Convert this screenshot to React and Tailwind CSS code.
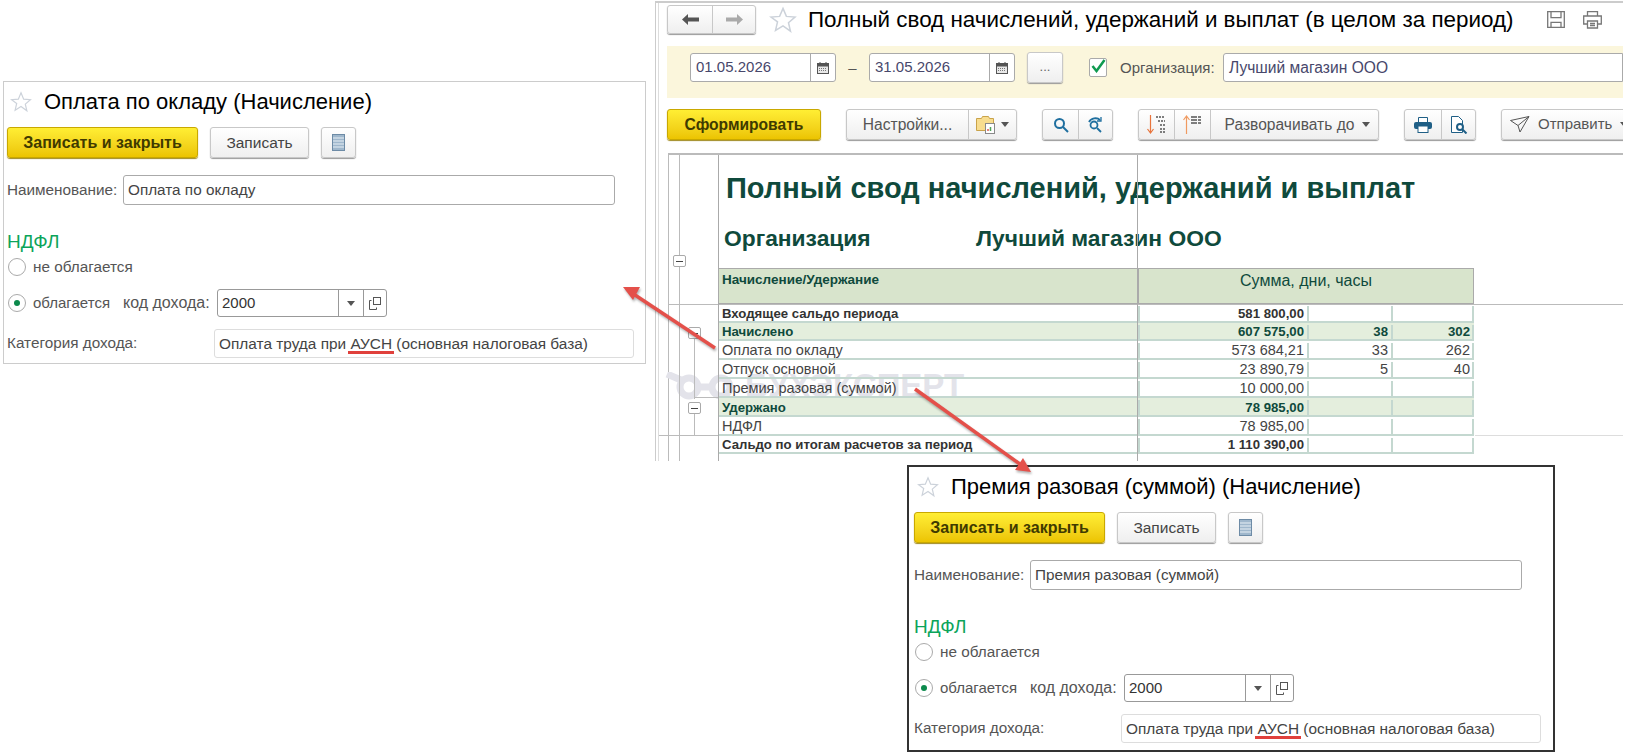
import React from 'react';

const FONT = { fontFamily: '"Liberation Sans", Arial, sans-serif' };

// ----- small drawn icons -----
const Star = ({ className }) => (
  <svg viewBox="0 0 24 24" className={className} fill="none" stroke="#ccd2da" strokeWidth="1.3">
    <path d="M12 2l2.9 6.9 7.4.6-5.6 4.8 1.7 7.3L12 17l-6.4 3.9 1.7-7.3L1.700 9.500l7.400-.6z" />
  </svg>
);

const ListIcon = () => (
  <svg width="13" height="17" viewBox="0 0 13 17">
    <rect x="0.500" y="0.500" width="12" height="16" fill="#9fb7cc" stroke="#6d8ba6" />
    <path d="M1 4h11M1 7h11M1 10h11M1 13h11" stroke="#e8f0f6" strokeWidth="1" />
  </svg>
);

const CopyIcon = () => (
  <svg width="12" height="13" viewBox="0 0 12 13" fill="none" stroke="#555">
    <rect x="4.500" y="0.500" width="7" height="7" />
    <path d="M2.500 3.500H.5v9h7v-2" />
  </svg>
);

const Caret = ({ color = '#555' }) => (
  <svg width="8" height="5" viewBox="0 0 8 5" className="shrink-0"><path d="M0 0h8L4 5z" fill={color} /></svg>
);

const Calendar = () => (
  <svg width="12" height="12" viewBox="0 0 12 12">
    <rect x="0.500" y="1.500" width="11" height="10" fill="#e8e8e8" stroke="#555" />
    <rect x="0.500" y="1.500" width="11" height="3" fill="#555" />
    <path d="M3 0v3M9 0v3" stroke="#555" />
    <path d="M2 6.500h8M2 8.500h8" stroke="#777" strokeDasharray="1 1" />
  </svg>
);

const Search = () => (
  <svg width="16" height="16" viewBox="0 0 16 16" fill="none" stroke="#1f6f9f" strokeWidth="2">
    <circle cx="6.500" cy="6.500" r="4.500" />
    <path d="M10 10l5 5" />
  </svg>
);

const SearchNext = () => (
  <svg width="17" height="16" viewBox="0 0 17 16" fill="none" stroke="#1f6f9f" strokeWidth="1.8">
    <circle cx="7" cy="8" r="3.500" />
    <path d="M10 11l4 4M2 5c2-4 8-5 11-2" />
    <path d="M14 0v4h-4" strokeWidth="1.300" />
  </svg>
);

const FolderReport = () => (
  <svg width="20" height="19" viewBox="0 0 20 19">
    <path d="M.5 3.500h5l1-2h6l1 2h4v12H.5z" fill="#f8dd8f" stroke="#c9a34a" />
    <rect x="9.500" y="8.500" width="9" height="10" fill="#fff" stroke="#8a8a8a" />
    <path d="M12 16v-2" stroke="#e0574f" strokeWidth="1.500" />
    <path d="M14.500 16v-4" stroke="#4fa45a" strokeWidth="1.500" />
  </svg>
);

const SortDown = () => (
  <svg width="19" height="19" viewBox="0 0 19 19" fill="none">
    <path d="M3.500 0v17M.5 14l3 4 3-4" stroke="#e8743c" strokeWidth="1.200" />
    <path d="M9 2h9M11 6h7M13 10h5M13 14h5M13 17h5" stroke="#555" strokeWidth="1.300" strokeDasharray="2 1" />
  </svg>
);

const SortUp = () => (
  <svg width="19" height="19" viewBox="0 0 19 19" fill="none">
    <path d="M3.500 2v17M.5 5l3-4 3 4" stroke="#f09a60" strokeWidth="1.200" />
    <path d="M8 2h10M8 5h10M8 8h10" stroke="#555" strokeWidth="1.300" strokeDasharray="6 1" />
  </svg>
);

const Printer = () => (
  <svg width="18" height="16" viewBox="0 0 18 16">
    <path d="M4.500 5V.5h9V5" fill="#fff" stroke="#1f5f86" />
    <rect x="0" y="5" width="18" height="7" rx="2" fill="#1f5f86" />
    <rect x="4" y="9" width="10" height="6.500" fill="#fff" stroke="#1f5f86" />
  </svg>
);

const Preview = () => (
  <svg width="18" height="18" viewBox="0 0 18 18" fill="none">
    <path d="M1.500.5h7l4 4v12h-11z" stroke="#1f5f86" fill="#fff" />
    <circle cx="10" cy="11" r="3" stroke="#1f5f86" strokeWidth="2" />
    <path d="M12.500 13.500l4 4" stroke="#1f5f86" strokeWidth="2" />
  </svg>
);

const Plane = () => (
  <svg width="20" height="17" viewBox="0 0 20 17" fill="none" stroke="#555" className="shrink-0">
    <path d="M.5 4.500L19 .5l-9 15.500L8 9.500zM8 9.500L19 .5" />
  </svg>
);

const Floppy = () => (
  <svg width="18" height="17" viewBox="0 0 18 17" fill="none" stroke="#777" strokeWidth="1.300">
    <path d="M.7.7h16.600v15.600H.7z" />
    <path d="M4 .7v6h10v-6M4 16.300v-5h10v5" />
  </svg>
);

const GrayPrinter = () => (
  <svg width="19" height="18" viewBox="0 0 19 18" fill="none" stroke="#777" strokeWidth="1.300">
    <path d="M4.500 5V.7h10V5M4 13H.7V5h17.600v8H15" />
    <path d="M4.500 10h10v7h-10zM7 12.500h5M7 14.500h5" />
  </svg>
);

const ArrowGlyph = ({ dir, color }) => (
  <svg width="17" height="11" viewBox="0 0 17 11" fill={color}>
    {dir === 'left' ? <path d="M0 5.500L6 0v3.500h11v4H6V11z" /> : <path d="M17 5.500L11 0v3.500H0v4h11V11z" />}
  </svg>
);

const Minus = ({ className }) => (
  <div className={`flex items-center justify-center w-[13px] h-[12px] bg-white border border-[#aaa] rounded-[2px] ${className}`}>
    <div className="w-[7px] h-[1px] bg-[#444]" />
  </div>
);

// ----- buttons and fields -----
const YELLOW = 'bg-gradient-to-b from-[#ffee33] to-[#ecc400] border border-[#c9a800] rounded-[3px] shadow-[0_1px_1px_#a08a20]';
const GRAY = 'bg-gradient-to-b from-white to-[#efefef] border border-[#c8c8c8] rounded-[3px] shadow-[0_1px_1px_#999]';

const Radio = ({ checked }) => (
  <div className="flex items-center justify-center w-[18px] h-[18px] rounded-full border border-[#aaa] bg-white shrink-0">
    {checked && <div className="w-[6px] h-[6px] rounded-full bg-[#0c8a4c]" />}
  </div>
);

// ----- the two item forms -----
const ItemForm = ({ frame, title, name, pad }) => (
  <div className={`absolute bg-white ${frame}`}>
    <div className={`flex items-center h-[39px] ${pad}`}>
      <Star className="w-[22px] h-[22px] ml-[3px] shrink-0" />
      <span className="ml-[12px] text-[22px] text-black whitespace-nowrap">{title}</span>
    </div>
    <div className={`flex mt-[6px] h-[31px] ${pad}`}>
      <div className={`flex items-center justify-center w-[191px] text-[16px] font-bold text-[#3f3a00] ${YELLOW}`}>Записать и закрыть</div>
      <div className={`flex items-center justify-center w-[99px] ml-[12px] text-[15.500px] text-[#444] ${GRAY}`}>Записать</div>
      <div className={`flex items-center justify-center w-[35px] ml-[12px] ${GRAY}`}><ListIcon /></div>
    </div>
    <div className={`flex items-center mt-[17px] h-[30px] ${pad}`}>
      <span className="w-[116px] text-[15.300px] text-[#555]">Наименование:</span>
      <div className="flex items-center w-[492px] h-full pl-[4px] border border-[#aaa] rounded-[3px] text-[15.300px] text-[#444]">{name}</div>
    </div>
    <div className={`flex items-center mt-[25px] h-[24px] text-[19px] text-[#0ba45a] ${pad}`}>НДФЛ</div>
    <div className={`flex items-center mt-[4px] h-[18px] text-[15.300px] text-[#555] ${pad}`}>
      <div className="ml-px"><Radio /></div>
      <span className="ml-[7px]">не облагается</span>
    </div>
    <div className={`flex items-center mt-[13px] h-[28px] text-[15px] text-[#555] ${pad}`}>
      <div className="ml-px"><Radio checked /></div>
      <span className="ml-[7px] w-[90px]">облагается</span>
      <span className="w-[94px] text-[16px] whitespace-nowrap">код дохода:</span>
      <div className="flex w-[170px] h-full border border-[#999] rounded-[3px]">
        <div className="flex items-center w-[120px] pl-[4px] text-[15px] text-[#333]">2000</div>
        <div className="flex items-center justify-center w-[25px] border-l border-[#999]"><Caret /></div>
        <div className="flex items-center justify-center flex-1 border-l border-[#999]"><CopyIcon /></div>
      </div>
    </div>
    <div className={`flex items-center mt-[12px] h-[29px] ${pad}`}>
      <span className="w-[207px] text-[15.300px] text-[#555]">Категория дохода:</span>
      <div className="flex items-center w-[420px] h-full pl-[4px] border border-[#ddd] rounded-[3px] text-[15.400px] text-[#444] whitespace-nowrap">
        Оплата труда при&nbsp;
        <span className="relative">
          АУСН
          <span className="absolute -left-[2px] -right-[2px] top-[19px] h-[3px] bg-[#e0403c]" />
        </span>
        &nbsp;(основная налоговая база)
      </div>
    </div>
  </div>
);

// ----- report data -----
const ROWS = [
  { h: 19, kind: 'total', name: 'Входящее сальдо периода', sum: '581 800,00' },
  { h: 18, kind: 'group', name: 'Начислено', sum: '607 575,00', days: '38', hours: '302' },
  { h: 19, name: 'Оплата по окладу', sum: '573 684,21', days: '33', hours: '262' },
  { h: 19, name: 'Отпуск основной', sum: '23 890,79', days: '5', hours: '40' },
  { h: 19, name: 'Премия разовая (суммой)', sum: '10 000,00' },
  { h: 19, kind: 'group', name: 'Удержано', sum: '78 985,00' },
  { h: 19, name: 'НДФЛ', sum: '78 985,00' },
  { h: 18, kind: 'total', name: 'Сальдо по итогам расчетов за период', sum: '1 110 390,00' },
];

const ReportRow = ({ row }) => {
  const tone =
    row.kind === 'group'
      ? 'bg-[#e4eedd] font-bold text-[13.200px] text-[#0f4a3c]'
      : row.kind === 'total'
        ? 'font-bold text-[13.200px] text-[#333]'
        : 'text-[14.500px] text-[#444]';
  return (
    <div className={`flex pt-[2px] border-b-2 border-[#c4d8d0] ${tone}`} style={{ height: row.h }}>
      <div className="flex items-center w-[419px] pl-[3px] whitespace-nowrap">{row.name}</div>
      <div className="flex items-center justify-end w-[169px] pr-[3px] border-l-2 border-[#c4d8d0]">{row.sum}</div>
      <div className="flex items-center justify-end w-[84px] pr-[3px] border-l-2 border-[#c4d8d0]">{row.days}</div>
      <div className="flex items-center justify-end w-[83px] pr-[2px] border-x-2 border-[#c4d8d0]">{row.hours}</div>
    </div>
  );
};

const ToolGroup = ({ className, children }) => (
  <div className={`flex shrink-0 h-full divide-x divide-[#c8c8c8] ${GRAY} ${className}`}>{children}</div>
);

const DateField = ({ value }) => (
  <div className="flex shrink-0 w-[146px] h-[29px] bg-white border border-[#aaa] rounded-[3px]">
    <div className="flex items-center flex-1 pl-[5px] text-[15px] text-[#47476b]">{value}</div>
    <div className="flex items-center justify-center w-[25px] border-l border-[#aaa]"><Calendar /></div>
  </div>
);

// ----- the report window -----
const ReportWindow = () => (
  <div className="absolute left-[655px] top-[1px] w-[968px] h-[460px] border-t-2 border-l border-[#ccc] overflow-hidden bg-white">
    <div className="flex flex-col h-full ml-[2px] pl-[8px] border-l border-[#ddd]">
      <div className="flex items-center h-[29px] mt-[2px]">
        <div className={`flex shrink-0 w-[89px] h-full ${GRAY}`}>
          <div className="flex items-center justify-center w-[45px] border-r border-[#c8c8c8]"><ArrowGlyph dir="left" color="#555" /></div>
          <div className="flex items-center justify-center flex-1"><ArrowGlyph dir="right" color="#aaa" /></div>
        </div>
        <Star className="w-[28px] h-[28px] ml-[13px] shrink-0" />
        <span className="ml-[11px] w-[739px] shrink-0 text-[22.400px] text-black whitespace-nowrap">Полный свод начислений, удержаний и выплат (в целом за период)</span>
        <div className="shrink-0"><Floppy /></div>
        <div className="ml-[18px] shrink-0"><GrayPrinter /></div>
        <div className="ml-[18px] w-[18px] h-[17px] shrink-0 translate-x-[15px] border border-[#777]" />
      </div>

      <div className="flex items-start h-[52px] mt-[12px] pt-[7px] pl-[23px] bg-[#fbf6dc]">
        <DateField value="01.05.2026" />
        <div className="w-[33px] shrink-0 text-center text-[15px] leading-[29px] text-[#555]">–</div>
        <DateField value="31.05.2026" />
        <div className={`flex items-center justify-center shrink-0 w-[36px] h-[31px] -mt-px ml-[12px] pb-[2px] text-[13px] text-[#666] ${GRAY}`}>...</div>
        <div className="flex items-center justify-center shrink-0 w-[18px] h-[19px] mt-[5px] ml-[26px] bg-white border border-[#aaa] rounded-[2px]">
          <svg width="15" height="14" viewBox="0 0 15 14" className="-mt-[3px]" fill="none" stroke="#0f9a50" strokeWidth="2.500"><path d="M1.500 7l4 5 8-11" /></svg>
        </div>
        <span className="ml-[13px] w-[103px] shrink-0 text-[15px] leading-[29px] text-[#555] whitespace-nowrap">Организация:</span>
        <div className="flex items-center flex-1 h-[29px] pl-[5px] bg-white border border-[#aaa] rounded-l-[3px] text-[15.600px] text-[#47476b]">Лучший магазин ООО</div>
      </div>

      <div className="flex items-center h-[31px] mt-[11px] whitespace-nowrap text-[15.600px] text-[#555]">
        <div className={`flex items-center justify-center shrink-0 w-[154px] h-full font-bold text-[#3f3a00] ${YELLOW}`}>Сформировать</div>
        <ToolGroup className="w-[171px] ml-[25px]">
          <div className="flex items-center justify-center w-[122px]">Настройки...</div>
          <div className="flex items-center justify-center flex-1 gap-[5px]"><FolderReport /><Caret /></div>
        </ToolGroup>
        <ToolGroup className="w-[71px] ml-[25px]">
          <div className="flex items-center justify-center w-[36px]"><Search /></div>
          <div className="flex items-center justify-center flex-1"><SearchNext /></div>
        </ToolGroup>
        <ToolGroup className="w-[241px] ml-[25px]">
          <div className="flex items-center justify-center w-[36px]"><SortDown /></div>
          <div className="flex items-center justify-center w-[36px]"><SortUp /></div>
          <div className="flex items-center justify-center flex-1 gap-[8px] pl-[6px]">Разворачивать до<Caret /></div>
        </ToolGroup>
        <ToolGroup className="w-[72px] ml-[25px]">
          <div className="flex items-center justify-center w-[37px]"><Printer /></div>
          <div className="flex items-center justify-center flex-1"><Preview /></div>
        </ToolGroup>
        <ToolGroup className="w-[130px] ml-[25px]">
          <div className="flex items-center gap-[8px] pl-[8px] text-[15px]"><Plane />Отправить<Caret /></div>
        </ToolGroup>
      </div>

      <div className="relative flex flex-1 mt-[13px] ml-px border-t-2 border-l border-[#bbb]">
        {/* watermark, under the sheet text */}
        <div className="absolute left-[-4px] top-[206px] flex items-center gap-[2px]">
          <svg width="78" height="28" viewBox="0 0 78 28" fill="none" stroke="#e3e3ea" strokeWidth="7">
            <circle cx="24" cy="15" r="9" />
            <circle cx="56" cy="15" r="9" />
            <path d="M2 2l14 6M33 15h14" />
          </svg>
          <span className="text-[33px] font-bold text-[#e3e3ea] whitespace-nowrap">БУХЭКСПЕРТ</span>
        </div>
        <div className="relative w-[49px] shrink-0">
          {/* outline tree in the left margin */}
          <div className="absolute left-[10px] top-0 bottom-0 w-px bg-[#bbb]" />
          <Minus className="absolute left-[4px] top-[100px]" />
          <div className="absolute left-[25px] top-[184px] w-px h-[60px] bg-[#bbb]" />
          <div className="absolute left-[25px] top-[242px] w-[24px] h-px bg-[#bbb]" />
          <Minus className="absolute left-[19px] top-[172px]" />
          <div className="absolute left-[25px] top-[258px] w-px h-[22px] bg-[#bbb]" />
          <div className="absolute left-[25px] top-[280px] w-[24px] h-px bg-[#bbb]" />
          <Minus className="absolute left-[19px] top-[247px]" />
        </div>
        <div className="relative z-10 flex-1 border-l border-[#aaa]">
          <div className="h-[113px] pt-[19px]">
            <div className="pl-[7px] text-[29px] leading-[28px] font-bold text-[#0f4a3c] whitespace-nowrap">Полный свод начислений, удержаний и выплат</div>
            <div className="flex mt-[24px] pl-[5px] text-[22.800px] leading-[24px] font-bold text-[#0f4a3c] whitespace-nowrap">
              <span className="w-[252px]">Организация</span>
              <span>Лучший магазин ООО</span>
            </div>
          </div>
          <div className="flex w-[755px] h-[36px] border-y border-[#aaa] border-r bg-[#d8e4cc] text-[#0f4a3c]">
            <div className="w-[419px] pl-[3px] pt-[1px] text-[13.500px] font-bold whitespace-nowrap">Начисление/Удержание</div>
            <div className="flex-1 text-center text-[16px] border-l border-[#aaa]">Сумма, дни, часы</div>
          </div>
          <div className="w-[755px]">
            {ROWS.map((row) => (
              <ReportRow key={row.name} row={row} />
            ))}
          </div>
          {/* long ruler line of the spreadsheet */}
          <div className="absolute left-[418px] top-0 bottom-0 w-px bg-[#aaa]" />
        </div>
        <div className="absolute left-0 right-0 top-[149px] h-px bg-[#bbb]" />
        <div className="absolute -left-[10px] w-[59px] top-[280px] h-px bg-[#bbb]" />
        <div className="absolute left-[806px] right-0 top-[280px] h-px bg-[#ddd]" />
      </div>
    </div>
  </div>
);

const Arrows = () => (
  <svg className="absolute inset-0 z-20 pointer-events-none drop-shadow-[1px_2px_1px_rgba(0,0,0,0.3)]" width="1627" height="755" viewBox="0 0 1627 755" fill="none">
    <g stroke="#e4504a" strokeWidth="3.500">
      <path d="M715 348L632 293" />
      <path d="M915 389L1024 467" />
    </g>
    <path d="M623 287l17 0-7 13z" fill="#e4504a" />
    <path d="M1031 472l-16-2 8-12z" fill="#e4504a" />
  </svg>
);

export default function App() {
  return (
    <div className="relative w-[1627px] h-[755px] bg-white overflow-hidden" style={FONT}>
      <ReportWindow />
      <ItemForm
        frame="left-[3px] top-[81px] w-[643px] border border-[#ccc] pb-[5px]"
        pad="pl-[3px]"
        title="Оплата по окладу (Начисление)"
        name="Оплата по окладу"
      />
      <ItemForm
        frame="left-[907px] top-[465px] w-[648px] border-2 border-[#333] pb-[7px]"
        pad="pl-[5px]"
        title="Премия разовая (суммой) (Начисление)"
        name="Премия разовая (суммой)"
      />
      <Arrows />
    </div>
  );
}
